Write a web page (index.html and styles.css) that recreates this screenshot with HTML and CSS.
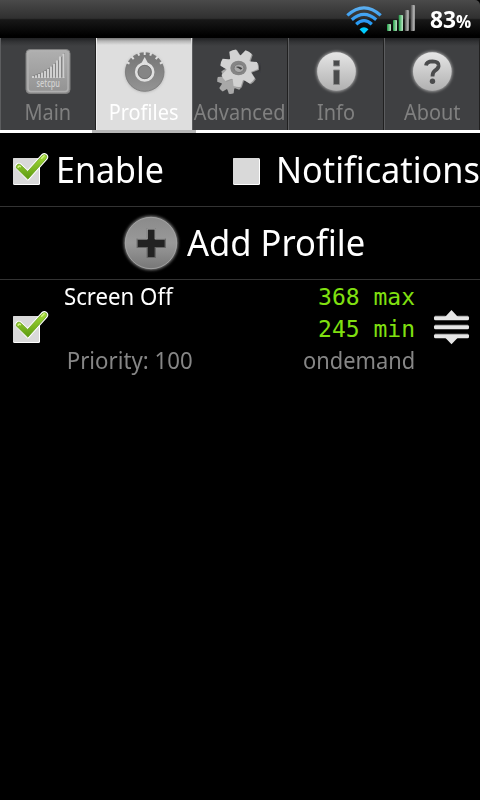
FILE: index.html
```html
<!DOCTYPE html>
<html lang="en">
<head>
<meta charset="utf-8">
<title>SetCPU</title>
<link rel="stylesheet" href="styles.css">
</head>
<body>
<svg width="0" height="0" class="defs">
  <defs>
    <linearGradient id="silver" x1="0" y1="0" x2="0" y2="1"><stop offset="0" stop-color="#e6e6e6"/><stop offset="1" stop-color="#b0b0b0"/></linearGradient>
    <linearGradient id="steel" x1="0" y1="0" x2="0" y2="1"><stop offset="0" stop-color="#757575"/><stop offset="1" stop-color="#949494"/></linearGradient>
    <linearGradient id="tile" x1="0" y1="0" x2="0" y2="1"><stop offset="0" stop-color="#b0b0b0"/><stop offset="1" stop-color="#929292"/></linearGradient>
    <linearGradient id="disc" x1="0" y1="0" x2="0" y2="1"><stop offset="0" stop-color="#8a8a8a"/><stop offset=".5" stop-color="#9a9a9a"/><stop offset="1" stop-color="#777"/></linearGradient>
    <linearGradient id="green" x1="0" y1="0" x2="0" y2="1"><stop offset="0" stop-color="#a6dc3a"/><stop offset="1" stop-color="#5c9a10"/></linearGradient>
    <linearGradient id="blue" gradientUnits="userSpaceOnUse" x1="0" y1="5" x2="0" y2="34"><stop offset="0" stop-color="#62b2f0"/><stop offset=".6" stop-color="#2a98f4"/><stop offset="1" stop-color="#00ccff"/></linearGradient>
    <linearGradient id="sig" x1="0" y1="0" x2="1" y2="0"><stop offset="0" stop-color="#1f9d45"/><stop offset="1" stop-color="#c2e8cb"/></linearGradient>
    <linearGradient id="sigoff" x1="0" y1="0" x2="1" y2="0"><stop offset="0" stop-color="#444"/><stop offset="1" stop-color="#d0d0d0"/></linearGradient>
    <filter id="glow" x="-20%" y="-20%" width="140%" height="140%"><feGaussianBlur stdDeviation="1.4"/></filter>
    <symbol id="box" viewBox="0 0 40 40"><rect x="3" y="8" width="27" height="27" rx="1.5" fill="#fff"/><rect x="3" y="8" width="26" height="26" rx="1" fill="#d9d9d9"/></symbol>
    <symbol id="tick" viewBox="0 0 40 40">
      <g transform="translate(.7 -.6)">
      <path d="M5 17.4 Q6.8 12.8 10 15.3 L17 21.8 L31.4 5.8 Q34 3.6 36 6 Q37.2 7.8 35.6 9.7 L17.2 30 Z" fill="#fff" stroke="#fff" stroke-width="2.2" stroke-linejoin="round"/>
      <path d="M5.2 18 Q6.8 13 10 15.5 L17 22 L31.5 6.2 Q34 4.1 35.8 6.2 Q36.7 7.8 35.2 9.6 L17.2 29.8 Z" fill="url(#green)" stroke="#659d1a" stroke-width=".7"/>
      <path d="M7.4 17.8 Q8 16 9.6 17.2 M31 8.8 L33.4 6.4" stroke="#d2f385" stroke-width="1.5" fill="none" stroke-linecap="round"/>
      </g>
    </symbol>
    <path id="tooth" d="M-5.500 -10L-3.600-18.500Q0-19.500 3.600-18.500L5.500-10Z"/>
    <g id="gear"><circle r="12.800"/><use href="#tooth"/><use href="#tooth" transform="rotate(51.4)"/><use href="#tooth" transform="rotate(102.8)"/><use href="#tooth" transform="rotate(154.3)"/><use href="#tooth" transform="rotate(205.7)"/><use href="#tooth" transform="rotate(257.1)"/><use href="#tooth" transform="rotate(308.6)"/></g>
  </defs>
</svg>
<div class="screen">
  <header class="status">
    <svg class="wifi" width="38" height="38" viewBox="0 0 38 38" fill="none" stroke="url(#blue)" stroke-width="3.2">
      <path d="M2.3 15.4 Q19 .3 35.7 15.4"/><path d="M6.8 19.8 Q19 9 31.2 19.8"/><path d="M11.2 24.2 Q19 17 26.8 24.2"/><path d="M14.5 29.2 Q19 25.3 23.5 29.2 L19 34Z" fill="#00ccff" stroke="none"/>
    </svg>
    <svg class="signal" width="30" height="38" viewBox="0 0 30 38">
      <g fill="url(#sig)"><rect x="1" y="24" width="4" height="7" rx=".7"/><rect x="7" y="20" width="4" height="11" rx=".7"/><rect x="12.7" y="15" width="4.3" height="16" rx=".7"/></g>
      <g fill="url(#sigoff)"><rect x="18.7" y="10" width="4" height="21" rx=".7"/><rect x="24.5" y="5" width="4.2" height="26" rx=".7"/></g>
    </svg>
    <span class="battery">83<small>%</small></span>
  </header>
  <nav class="tabs">
    <div class="tab">
      <svg width="48" height="48" viewBox="0 0 48 48">
        <rect x="2" y="1.5" width="44" height="44" rx="4" fill="url(#tile)" stroke="#808080"/>
        <rect x="4" y="3.5" width="40" height="40" rx="3" fill="none" stroke="#b0b0b0" stroke-width="1.6"/>
        <path d="M8 28 Q28 22 41 5 V29 H8Z" fill="#858585"/>
        <path d="M9 30V28M12 30V27.2M15 30V26M18 30V24.5M21 30V23M24 30V21M27 30V18.5M30 30V16M33 30V12.5M36 30V8.5M39.5 30V6" stroke="#d0d0d0" stroke-width="2"/>
        <text x="12.5" y="39" textLength="23.5" lengthAdjust="spacingAndGlyphs" class="logo">setcpu</text>
      </svg>
      <span class="label">Main</span>
    </div>
    <div class="tab selected">
      <svg width="48" height="48" viewBox="0 0 48 48">
        <circle cx="24.7" cy="24.5" r="19.5" fill="#aaa" filter="url(#glow)"/>
        <circle cx="24.7" cy="24" r="19.3" fill="url(#steel)" stroke="#777" stroke-width=".8"/>
        <g stroke="#dedede" stroke-width="2"><path d="M24.7 3.5V7"/><path d="M18 4.6l1.2 3"/><path d="M31.4 4.6l-1.2 3"/><path d="M11.5 8.5l2.2 2.6"/><path d="M37.9 8.5l-2.2 2.6"/><path d="M6.5 14l3 1.6"/><path d="M42.9 14l-3 1.6"/></g>
        <path d="M24.7 9 L29 17 H20.4Z" fill="#dedede"/>
        <circle cx="24.7" cy="24" r="8.4" fill="#858585" stroke="#e0e0e0" stroke-width="2.8"/>
        <circle cx="24.7" cy="24" r="6.7" fill="none" stroke="#666" stroke-width=".7"/>
      </svg>
      <span class="label">Profiles</span>
    </div>
    <div class="tab">
      <svg class="gears" width="48" height="48" viewBox="0 0 48 48">
        <circle cx="45" cy="20" r="3" fill="#303133" filter="url(#glow)"/>
        <use href="#gear" transform="translate(17 33) rotate(20) scale(.68)" fill="#a8a8a8"/>
        <use href="#gear" transform="translate(27 20.8) rotate(-20)" fill="#999"/>
        <use href="#gear" transform="translate(26 20) rotate(-20)" fill="#d2d2d2"/>
        <ellipse cx="25.500" cy="20" rx="8.2" ry="7.3" fill="#858585"/>
        <ellipse cx="26" cy="20.3" rx="5" ry="4.2" fill="#a9a9a9" stroke="#777"/>
        <path d="M22.800 19q3-1.500 6.5 1.2l-1.5 1.5q-2-1.700-5-2.7" fill="#444"/>
      </svg>
      <span class="label">Advanced</span>
    </div>
    <div class="tab">
      <svg width="48" height="48" viewBox="0 0 48 48">
        <circle cx="24.5" cy="23.5" r="20" fill="#aaa" filter="url(#glow)"/>
        <circle cx="24.5" cy="23.5" r="19.3" fill="url(#silver)"/>
        <path d="M21.5 12.5h6v5.5h-6zM21.5 22h6v14.5h-6z" fill="#4a4b4c" stroke="#888" stroke-width=".9"/>
      </svg>
      <span class="label">Info</span>
    </div>
    <div class="tab">
      <svg width="48" height="48" viewBox="0 0 48 48">
        <circle cx="24.3" cy="23.5" r="20" fill="#aaa" filter="url(#glow)"/>
        <circle cx="24.3" cy="23.5" r="19.3" fill="url(#silver)"/>
        <path d="M18 17.5 Q18.5 13.3 24.5 13.3 Q31 13.5 30.6 18 Q30.3 20.5 27 22.6 Q24.5 24.5 24.5 28.5" fill="none" stroke="#4a4b4c" stroke-width="3.8"/>
        <circle cx="24.5" cy="33.2" r="2.7" fill="#4a4b4c"/>
      </svg>
      <span class="label">About</span>
    </div>
  </nav>
  <div class="strip"></div>
  <section class="options">
    <label class="option"><svg width="40" height="40"><use href="#box"/><use href="#tick"/></svg><span class="big">Enable</span></label>
    <label class="option"><svg width="40" height="40"><use href="#box"/></svg><span class="big notifications">Notifications</span></label>
  </section>
  <section class="add">
    <svg width="62" height="62" viewBox="0 0 62 62">
      <circle cx="31" cy="31" r="27" fill="#888" filter="url(#glow)"/>
      <circle cx="31" cy="31" r="25.7" fill="url(#disc)" stroke="#aaa" stroke-width=".8"/>
      <path d="M27.2 17h8v10h10v8.5h-10v10h-8v-10h-10v-8.5h10z" fill="#222" stroke="#666" stroke-width="1.2"/>
      <path d="M17.5 27h9.7V17h8v10h9.7" fill="none" stroke="#b0b0b0" stroke-width=".8"/>
    </svg>
    <span class="big addlabel">Add Profile</span>
  </section>
  <section class="profile">
    <svg class="check" width="40" height="40"><use href="#box"/><use href="#tick"/></svg>
    <div class="details">
      <span class="name">Screen Off</span>
      <span class="priority">Priority: 100</span>
    </div>
    <div class="speeds">
      <span class="mono">368 max</span>
      <span class="mono">245 min</span>
      <span class="governor">ondemand</span>
    </div>
    <svg class="grip" width="38" height="38" viewBox="0 0 38 38" fill="#e6e6e6">
      <rect x="2" y="8" width="35" height="4.200" rx="1.5"/><rect x="2" y="17" width="35" height="4.200" rx="1.5"/><rect x="2" y="26" width="35" height="4.200" rx="1.5"/>
      <path d="M13.500 8.5L19.5 2L25.5 8.5ZM13.500 30L19.5 36.300L25.500 30Z"/>
      <path d="M3 8.200H13.500M25.500 8.200H36M3 17.2H36M3 26.2H36" stroke="#999" stroke-width=".9"/>
    </svg>
  </section>
</div>
</body>
</html>
```
FILE: styles.css
```css
* { box-sizing: border-box; }
body { margin: 0; background: #000; color: #fff; font-family: "Noto Sans", "Open Sans", sans-serif; }
.defs { position: absolute; }
.screen { width: 480px; height: 800px; overflow: hidden; background: #000; }
span { white-space: nowrap; }
.status { height: 38px; display: flex; background: linear-gradient(#4a4a4a, #303030 48%, #181818 52%, #000 94%); border-top-right-radius: 5px; padding-left: 345px; }
.status svg { flex: none; }
.signal { margin-left: 3px; }
.battery { margin-left: 14px; font-family: "Open Sans", sans-serif; font-size: 23px; font-weight: 700; line-height: 38px; height: 38px; transform: scaleX(.99); transform-origin: left; }
.battery small { font-size: 17px; }
.tabs { height: 92px; display: grid; grid-template-columns: repeat(5, 96px); }
.tab { display: flex; flex-direction: column; align-items: center; padding-top: 10px; background: linear-gradient(#202123, #333436 4px, #3f4042 8px, #3f4042); border-left: 1px solid #5c5d5f; border-right: 1px solid #202020; color: #808080; }
.tab svg { flex: none; }
.tab .gears { margin-left: -7px; }
.tab.selected { background: linear-gradient(#777, #b5b5b5 3px, #dedede 7px, #dedede); color: #fff; border-color: #ccc #dedede #ccc #eee; }
.label { font-size: 22px; line-height: 30px; height: 30px; transform: scaleX(.905); }
.logo { font: 600 10.5px "Open Sans", sans-serif; fill: #d0d0d0; }
.strip { height: 3px; background: linear-gradient(90deg, #fff 92px, #b7b7b7 92px, #b7b7b7 196px, #fff 196px); }
.options { height: 74px; border-bottom: 1px solid #333; display: grid; grid-template-columns: 220px 260px; padding-left: 10px; }
.option { display: flex; align-items: center; }
.option svg, .add svg { flex: none; }
.big { font-size: 36px; line-height: 48px; transform: scaleX(.945); transform-origin: left; }
.option .big { margin-left: 6px; padding-top: 1px; }
.option .notifications { transform: scaleX(.952); }
.add { height: 73px; border-bottom: 1px solid #333; display: flex; align-items: center; padding-left: 120px; }
.add .addlabel { margin-left: 5px; transform: scaleX(.96); }
.profile { height: 98px; display: flex; padding-left: 10px; }
.check { margin-top: 28px; flex: none; }
.details { width: 180px; height: 96px; margin-left: 14px; display: flex; flex-direction: column; justify-content: space-between; }
.details span, .speeds span { font-size: 24px; line-height: 32px; transform: scaleX(.925); transform-origin: left; }
.priority, .speeds .governor { color: #868686; }
.details .priority { padding-left: 3px; }
.speeds { width: 171px; padding-top: 1px; display: flex; flex-direction: column; align-items: flex-end; }
.speeds .governor { margin-top: -1px; transform: scaleX(.91); transform-origin: right; }
.speeds .mono { font-family: "DejaVu Sans Mono", monospace; font-size: 23px; color: #80e010; transform: none; }
.grip { margin: 28px 0 0 17px; flex: none; }
```
